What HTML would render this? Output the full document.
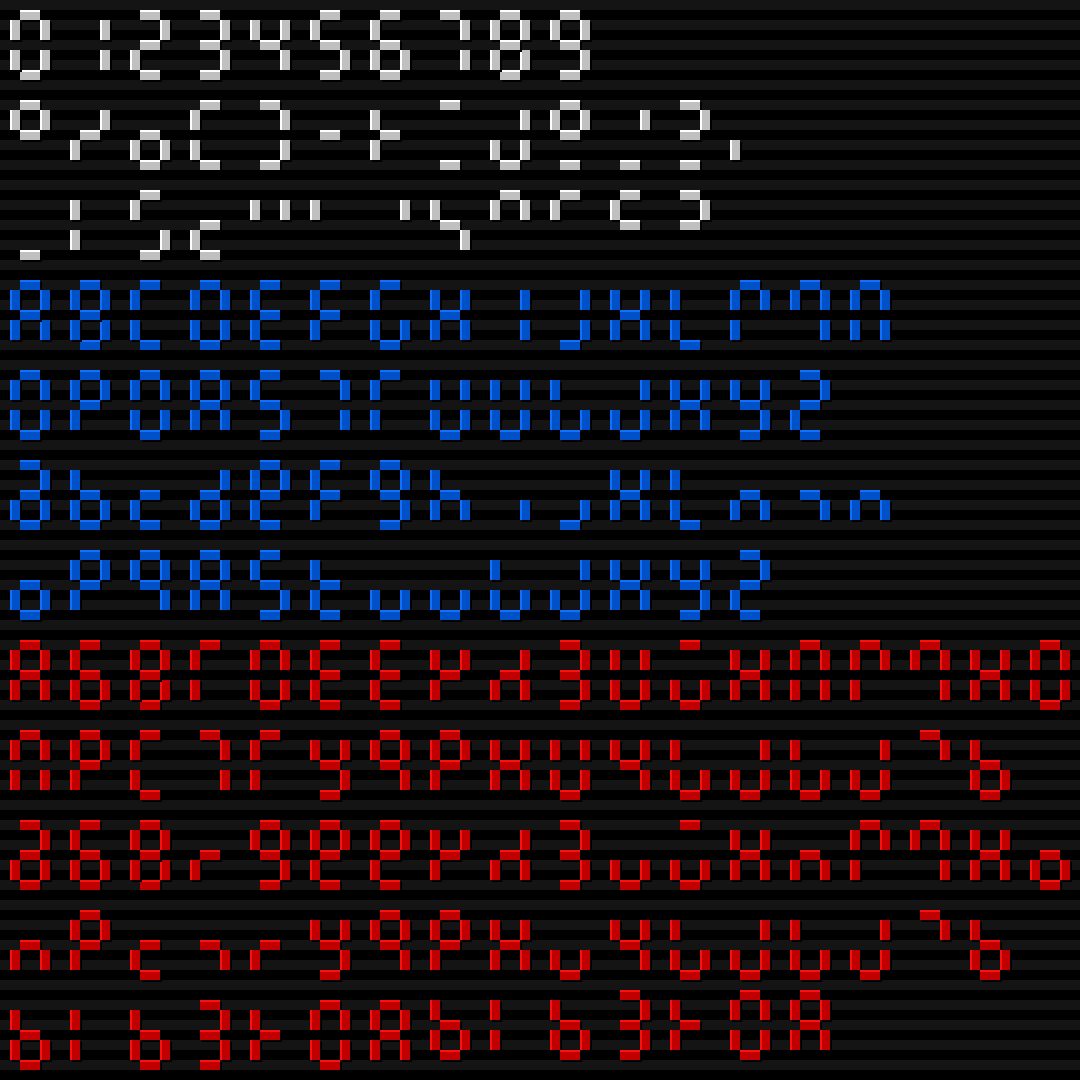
<!DOCTYPE html>
<html><head><meta charset="utf-8"><style>
html,body{margin:0;padding:0}
body{width:1080px;height:1080px;overflow:hidden;position:relative;
background:repeating-linear-gradient(to bottom,#141414 0,#141414 10px,#000 10px,#000 20px);}
.s{position:absolute;box-sizing:border-box;box-shadow:2px 2px 0 #000}
.h{width:20px;height:10px;border-top:2px solid}
.v{width:10px;height:20px;border-left:2px solid}
.w{background:#c0c0c0;border-color:#fff}
.b{background:#0050c8;border-color:#1070ff}
.r{background:#c00000;border-color:#ff1010}
</style></head><body>
<script>
var S={a:[1,1,'h'],b:[3,2,'v'],c:[3,5,'v'],d:[1,7,'h'],e:[0,5,'v'],f:[0,2,'v'],g:[1,4,'h']};
var R=[
[0,'w',["abcdef","bc","abged","abgcd","fbgc","afgcd","afgecd","abc","abcdefg","abfgcd"]],
[9,'w',["afbg","bge","gecd","afed","abcd","g","fge","ad","becd","abfgd","bd","abgd","e"]],
[18,'w',["d","fe","afcd","ged","fb","f","b","fgc","afb","af","afg","abg"]],
[27,'b',["abcefg","abcdefg","afed","afbecd","afged","afge","afecd","fbgec","bc","bcd","fbgec","fed","afbe","afbc","afbec"]],
[36,'b',["afbecd","afbge","afbecd","afbgec","afgcd","abc","afe","fbecd","fbecd","fecd","becd","fbgec","fbgcd","abged"]],
[45,'b',["abgecd","fgecd","ged","bgecd","afbged","afge","afbgcd","fgec","c","cd","fbgec","fed","gec","gc","gec"]],
[54,'b',["gecd","afbge","afbgc","afbgec","afgcd","fged","ecd","ecd","fecd","becd","fbgec","fbgcd","abged"]],
[63,'r',["afbgec","afgecd","abcdefg","afe","afbecd","afged","afged","fbge","bgec","abgcd","fbecd","aecd","fbgec","afbec","afbe","afbc","fbgec","afbecd"]],
[72,'r',["afbec","afbge","afed","abc","afe","fbgcd","afbgc","afbge","fbgec","fbecd","fbgc","fecd","becd","fecd","becd","ab","fgecd"]],
[81,'r',["abgecd","afgecd","abcdefg","ge","afbgcd","afbged","afbged","fbge","bgec","abgcd","ecd","aecd","fbgec","gec","afbe","afbc","fbgec","gecd"]],
[90,'r',["gec","afbge","ged","gc","ge","fbgcd","afbgc","afbge","fbgec","ecd","fbgc","fecd","becd","fecd","becd","ab","fgecd"]],
[99,'r',["fgecd","fe","fgecd","abgcd","fge","afbecd","afbgec","^fgecd","^fe","^fgecd","^abgcd","^fge","^afbecd","^afbgec"]]
];
var html='';
R.forEach(function(row){
  row[2].forEach(function(g,i){
    var oy=row[0],ox=1+6*i;
    if(g.charAt(0)=='^'){oy-=1;g=g.slice(1);}
    for(var k=0;k<g.length;k++){
      var s=S[g.charAt(k)];
      html+='<div class="s '+s[2]+' '+row[1]+'" style="left:'+((ox+s[0])*10)+'px;top:'+((oy+s[1])*10)+'px"></div>';
    }
  });
});
document.write(html);
</script>
</body></html>
